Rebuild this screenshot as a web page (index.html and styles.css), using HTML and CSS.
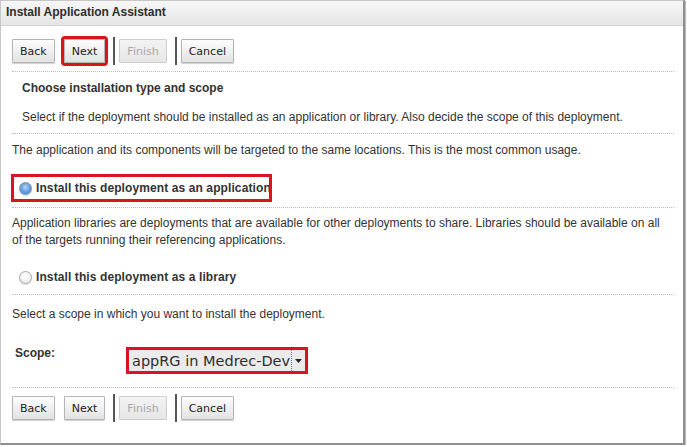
FILE: index.html
```html
<!DOCTYPE html>
<html>
<head>
<meta charset="utf-8">
<link rel="stylesheet" href="styles.css">
</head>
<body>
<div class="frame">
  <div class="header">Install Application Assistant</div>
  <div class="content">
    <div class="toolbar top">
      <button class="btn">Back</button>
      <button class="btn marked">Next</button>
      <span class="sep"></span>
      <button class="btn disabled">Finish</button>
      <span class="sep"></span>
      <button class="btn">Cancel</button>
    </div>
    <div class="rule"></div>
    <div class="intro">
      <div class="title">Choose installation type and scope</div>
      <div class="desc">Select if the deployment should be installed as an application or library. Also decide the scope of this deployment.</div>
    </div>
    <div class="rule"></div>
    <p class="text t1">The application and its components will be targeted to the same locations. This is the most common usage.</p>
    <div class="choice marked-box">
      <span class="radio checked"></span>
      <span class="label">Install this deployment as an application</span>
    </div>
    <div class="rule r2"></div>
    <p class="text t2">Application libraries are deployments that are available for other deployments to share. Libraries should be available on all<br>of the targets running their referencing applications.</p>
    <div class="choice plain">
      <span class="radio"></span>
      <span class="label">Install this deployment as a library</span>
    </div>
    <div class="rule r3"></div>
    <p class="text t3">Select a scope in which you want to install the deployment.</p>
    <div class="scope-row">
      <span class="scope-label">Scope:</span>
      <div class="select">
        <span class="select-value">appRG in Medrec-Dev</span>
        <span class="select-arrow"><svg width="7" height="4" viewBox="0 0 7 4"><path d="M0 0H7L3.5 4Z" fill="#222"/></svg></span>
      </div>
    </div>
    <div class="rule r4"></div>
    <div class="toolbar bottom">
      <button class="btn">Back</button>
      <button class="btn">Next</button>
      <span class="sep"></span>
      <button class="btn disabled">Finish</button>
      <span class="sep"></span>
      <button class="btn">Cancel</button>
    </div>
  </div>
</div>
</body>
</html>
```

FILE: styles.css
```css
html, body {
  margin: 0;
  padding: 0;
  background: #ffffff;
}

body {
  font-family: "Liberation Sans", Arial, sans-serif;
  font-size: 12px;
  color: #333;
}

.frame {
  box-sizing: border-box;
  width: 685px;
  height: 445px;
  border: 1px solid #c6c6c6;
  border-right: 2px solid #8e8e8e;
  border-bottom: 2px solid #8e8e8e;
  box-shadow: 1px 1px 1px #c0c0c0;
  background: #fff;
}

.header {
  height: 24px;
  line-height: 23px;
  padding-left: 5px;
  font-weight: bold;
  color: #2e2e2e;
  background: linear-gradient(#f7f7f7, #e5e5e5);
  border-bottom: 1px solid #d6d6d6;
}

.content {
  padding: 0 9px 0 11px;
}

.toolbar {
  display: flex;
  align-items: center;
  height: 28px;
}

.toolbar.top {
  margin-top: 11px;
}

.toolbar.bottom {
  margin-top: 6px;
}

.btn {
  box-sizing: border-box;
  height: 24px;
  padding: 0 7px;
  margin: 0 9px 0 0;
  font-family: "DejaVu Sans", sans-serif;
  font-size: 11px;
  color: #222;
  background: linear-gradient(#fdfdfd, #e2e2e2);
  border: 1px solid #b4b4b4;
  border-radius: 1px;
  box-shadow: 0 1px 1px #d0d0d0;
}

.btn.marked {
  outline: 3px solid #d8141e;
  outline-offset: 0;
}

.btn.disabled {
  color: #a8a8a8;
  background: linear-gradient(#f3f3f3, #e6e6e6);
  border-color: #cdcdcd;
  box-shadow: none;
}

.sep {
  width: 2px;
  height: 28px;
  background: #555;
  margin: 0 4px 0 -1px;
}

.rule {
  height: 0;
  border-top: 1px dotted #bdbdbd;
  margin-top: 6px;
}

.intro {
  padding-left: 10px;
}

.title {
  font-weight: bold;
  line-height: 16px;
  margin-top: 8px;
}

.desc {
  line-height: 16px;
  margin-top: 13px;
  margin-bottom: 8px;
}

.text {
  margin: 0;
  line-height: 17px;
}

.t1 {
  margin-top: 8px;
}

.t2 {
  margin-top: 7px;
}

.t3 {
  margin-top: 11px;
}

.choice {
  box-sizing: border-box;
  display: flex;
  align-items: center;
  height: 28px;
  border: 3px solid transparent;
  padding-left: 5px;
  margin-left: -1px;
  overflow: hidden;
  white-space: nowrap;
}

.choice.marked-box {
  width: 261px;
  border-color: #d8141e;
  margin-top: 15px;
}

.choice.plain {
  margin-top: 14px;
}

.rule.r2 {
  margin-top: 5px;
}

.rule.r3 {
  margin-top: 3px;
}

.rule.r4 {
  margin-top: 13px;
}

.radio {
  box-sizing: border-box;
  flex: none;
  width: 13px;
  height: 13px;
  border-radius: 50%;
  border: 1px solid #a9a9a9;
  background: radial-gradient(circle at 50% 35%, #ffffff, #e6e6e6);
  box-shadow: 0 1px 1px #d5d5d5;
  margin-right: 4px;
}

.radio.checked {
  border-color: #7f93ab;
  background: radial-gradient(circle at 50% 40%, #bcd8f7 0, #6ea3e4 45%, #3f7fd0 100%);
}

.label {
  font-weight: bold;
  color: #333;
  letter-spacing: 0.1px;
}

.scope-row {
  display: flex;
  align-items: flex-start;
  margin-top: 23px;
}

.scope-label {
  width: 110px;
  padding-left: 3px;
  font-weight: bold;
  line-height: 14px;
}

.select {
  box-sizing: border-box;
  display: flex;
  align-items: center;
  width: 182px;
  height: 27px;
  border: 3px solid #d8141e;
  background: #ebebeb;
  margin-left: 1px;
  margin-top: 1px;
}

.select-value {
  flex: 1;
  padding-left: 3px;
  font-family: "DejaVu Sans", sans-serif;
  font-size: 14.5px;
  color: #2e2e2e;
  white-space: nowrap;
}

.select-arrow {
  display: flex;
  align-items: center;
  justify-content: center;
  width: 13px;
  height: 100%;
  border-left: 1px dotted #777;
}
```
